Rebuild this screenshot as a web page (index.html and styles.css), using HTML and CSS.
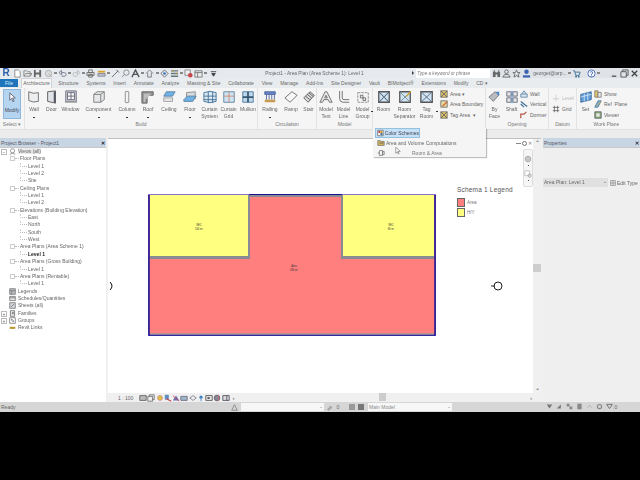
FILE: index.html
```html
<!DOCTYPE html>
<html lang="en">
<head>
    <meta charset="UTF-8">
    <title>Project1 - Area Plan (Area Scheme 1): Level 1</title>
    <link rel="stylesheet" href="styles.css">
</head>
<body>
<div class="letterbox"></div>
<div class="app">
    <!-- Title bar -->
    <div class="titlebar">
        <div class="qat">
            <span class="logo">R</span>
            <svg viewBox="0 0 10 10"><path d="M2 1h4l2 2v6H2z" fill="#fff" stroke="#888"/></svg>
            <svg viewBox="0 0 10 10"><path d="M1 8V2h3l1 1h3v5zM1 8l2-3h7l-2 3" fill="#e8e8e8" stroke="#888"/></svg>
            <svg viewBox="0 0 10 10"><path d="M1 1h8v8H1z" fill="#666"/><path d="M3 1h4v3H3zM3 6h4v3H3z" fill="#eee"/></svg>
            <svg viewBox="0 0 10 10"><circle cx="5" cy="5" r="3.500" fill="#ddd" stroke="#aaa"/><path d="M5 5l4 4" stroke="#aaa"/></svg>
            <i class="dd"></i>
            <svg viewBox="0 0 10 10"><path d="M1 4l3-2.500v5zM4 4h3a2 2 0 0 1 0 4H4" fill="none" stroke="#778"/></svg>
            <i class="dd"></i>
            <svg viewBox="0 0 10 10"><path d="M9 4L6 1.500v5zM6 4H3a2 2 0 0 0 0 4h3" fill="none" stroke="#bbb"/></svg>
            <i class="dd"></i>
            <svg viewBox="0 0 10 10"><path d="M3 1h4v3H3zM1 4h8v3H1zM3 6h4v3H3z" fill="#eee" stroke="#666"/></svg>
            <svg viewBox="0 0 10 10"><path d="M1 2h8v2H1z" fill="#d8a52a"/><path d="M1 5h8v3H1z" fill="#b9c2cc" stroke="#889"/></svg>
            <i class="dd"></i>
            <svg viewBox="0 0 10 10"><path d="M1 9l7-7M6 1l3 3" stroke="#666" fill="none"/></svg>
            <svg viewBox="0 0 10 10"><circle cx="6" cy="4" r="3" fill="none" stroke="#888"/><path d="M4 6L1 9" stroke="#888"/></svg>
            <svg viewBox="0 0 10 10"><path d="M1 9l4-8 4 8M3 6h4" fill="none" stroke="#555" stroke-width="1.500"/></svg>
            <i class="dd"></i>
            <svg viewBox="0 0 10 10"><path d="M1 5l4-4 4 4M3 4v5h4V4" fill="none" stroke="#777"/></svg>
            <i class="dd"></i>
            <svg viewBox="0 0 10 10"><path d="M5 1l4 4-4 4-4-4z" fill="none" stroke="#666"/><circle cx="5" cy="5" r="1.500" fill="#3a78b8"/></svg>
            <svg viewBox="0 0 10 10"><path d="M1 2h8M1 5h8M1 8h8" stroke="#677" stroke-width="1.500"/><path d="M3 1v2M7 4v2" stroke="#c8a22a"/></svg>
            <i class="dd"></i>
            <svg viewBox="0 0 10 10"><path d="M1 1h6v6H1z" fill="#eee" stroke="#888"/><circle cx="7" cy="7" r="2.500" fill="#c9454a"/></svg>
            <svg viewBox="0 0 10 10"><path d="M1 2h8v7H1z" fill="#eee" stroke="#777"/><path d="M1 4h8M4 4v5" stroke="#777"/></svg>
            <i class="dd"></i>
            <svg viewBox="0 0 10 10"><path d="M2 3h6M3 5l2 3 2-3z" stroke="#444" fill="#444"/></svg>
        </div>
        <div class="doc-title">Project1 - Area Plan (Area Scheme 1): Level 1</div>
        <div class="arrow-r"></div>
        <div class="search">Type a keyword or phrase</div>
        <div class="infocenter">
            <svg viewBox="0 0 10 10"><path d="M1 3h3v6H1zM6 3h3v6H6zM2 1h1v2H2zM7 1h1v2H7zM4 4h2v2H4z" fill="#666"/></svg>
            <svg viewBox="0 0 10 10"><circle cx="5" cy="3" r="2" fill="none" stroke="#666"/><path d="M1 9l2-3h4l2 3z" fill="none" stroke="#666"/></svg>
            <svg viewBox="0 0 10 10"><path d="M5 1l1.200 3H9L6.800 6l1 3L5 7.300 2.200 9l1-3L1 4h2.800z" fill="none" stroke="#666"/></svg>
            <svg viewBox="0 0 10 10"><circle cx="5" cy="3" r="2.500" fill="#3b62b5"/><path d="M1 9.500V7h8v2.500z" fill="#3b62b5"/></svg>
            <span class="user">georget@arp...</span>
            <i class="dd"></i>
            <svg viewBox="0 0 10 10"><path d="M1 2h2l1 5h4l1-3.500H3.500" fill="none" stroke="#3f6f96"/><circle cx="4.500" cy="8.500" r="1" fill="#3f6f96"/><circle cx="7.500" cy="8.500" r="1" fill="#3f6f96"/></svg>
            <svg class="help" viewBox="0 0 10 10"><circle cx="5" cy="5" r="4" fill="#fff" stroke="#3b62b5"/><path d="M3.700 4a1.300 1.300 0 1 1 1.300 1.500V6.500M5 7.300v1" fill="none" stroke="#3b62b5"/></svg>
            <i class="dd"></i>
        </div>
        <div class="winbtns">
            <svg viewBox="0 0 10 10"><path d="M2 8h5" stroke="#555" stroke-width="1.500"/></svg>
            <svg viewBox="0 0 10 10"><path d="M1 3h6v6H1zM3 3V1h6v6H7" fill="none" stroke="#555"/></svg>
            <svg viewBox="0 0 10 10"><path d="M2 2l6 6M8 2l-6 6" stroke="#444" stroke-width="1.500"/></svg>
        </div>
    </div>

    <!-- Tabs -->
    <div class="tabs">
        <div class="tab-file">File</div>
        <div class="tab active">Architecture</div>
        <div class="tab">Structure</div>
        <div class="tab">Systems</div>
        <div class="tab">Insert</div>
        <div class="tab">Annotate</div>
        <div class="tab">Analyze</div>
        <div class="tab">Massing &amp; Site</div>
        <div class="tab">Collaborate</div>
        <div class="tab">View</div>
        <div class="tab">Manage</div>
        <div class="tab">Add-Ins</div>
        <div class="tab">Site Designer</div>
        <div class="tab">Vault</div>
        <div class="tab">BIMobject®</div>
        <div class="tab">Extensions</div>
        <div class="tab">Modify</div>
        <div class="tab">CD ▾</div>
    </div>

    <!-- Ribbon -->
    <div class="ribbon">
        <div class="panel p-select">
            <div class="tools">
                <div class="modify">
                    <svg viewBox="0 0 12 12"><path d="M3 1v8l2-2 1.500 3.500 1.200-.5L6.200 6.500H9z" fill="#fff" stroke="#667"/></svg>
                    <span>Modify</span>
                </div>
            </div>
            <div class="panel-label">Select ▾</div>
        </div>
        <div class="panel p-build">
            <div class="tools">
                <div class="tool w18"><svg viewBox="0 0 16 16"><path d="M2 2q5 3 11 1v10q-6 2-11-1z" fill="#eceef0" stroke="#666"/></svg><span>Wall</span><b></b></div>
                <div class="tool w17"><svg viewBox="0 0 16 16"><path d="M3 2l9-1v14l-9-2z" fill="#dfe2e6" stroke="#555"/><path d="M10 2l2-1v14l-2-1z" fill="#556"/></svg><span>Door</span></div>
                <div class="tool w21"><svg viewBox="0 0 16 16"><path d="M2 1h12v12H2z" fill="#cfd5da" stroke="#667"/><path d="M4 3h8v8H4z" fill="#f4f6f7" stroke="#667"/><path d="M8 3v8M4 7h8" stroke="#667"/><path d="M1 13h14v1.500H1z" fill="#999"/></svg><span>Window</span></div>
                <div class="tool w35"><svg viewBox="0 0 16 16"><path d="M2 5l4-3h8v9l-4 3H2z" fill="#e6e8ea" stroke="#777"/><path d="M2 5h8v9M10 5l4-3" fill="none" stroke="#777"/></svg><span>Component</span><b></b></div>
                <div class="tool w22"><svg viewBox="0 0 16 16"><path d="M6 2q2-1 4 0v12q-2 1-4 0z" fill="#f2f3f4" stroke="#888"/></svg><span>Column</span><b></b></div>
                <div class="tool w20"><svg viewBox="0 0 16 16"><path d="M1 2h13v4H7v9H1z" fill="#8f8f8f" stroke="#666"/><path d="M3 4h9L5 11v3H3z" fill="#bdbdbd"/></svg><span>Roof</span><b></b></div>
                <div class="tool w22"><svg viewBox="0 0 16 16"><path d="M5 2h10l-3 5H2z" fill="#6fb3e6" stroke="#5a7f9f"/><path d="M2 9h10v4H2z" fill="#e8e9ea" stroke="#999"/></svg><span>Ceiling</span></div>
                <div class="tool w20"><svg viewBox="0 0 16 16"><path d="M4 3l10-1v8l-10 1z" fill="#d8dadc" stroke="#888"/><path d="M1 11l4-4h10l-4 6H1z" fill="#6fb3e6" stroke="#5a7f9f"/></svg><span>Floor</span><b></b></div>
                <div class="tool w19"><svg viewBox="0 0 16 16"><path d="M1 3q7-3 14 0v10q-7 3-14 0z" fill="#dbe8f2" stroke="#3f6f96"/><path d="M6 2v13M11 2v13M1 7h14M1 11h14" stroke="#3f6f96" fill="none"/></svg><span>Curtain<br>System</span></div>
                <div class="tool w19"><svg viewBox="0 0 16 16"><path d="M2 2h12v12H2z" fill="#cfe3f3" stroke="#5a7f9f"/><path d="M8 2v12M2 7h12" stroke="#d08a6a"/></svg><span>Curtain<br>Grid</span></div>
                <div class="tool w20"><svg viewBox="0 0 16 16"><path d="M2 2h12v12H2z" fill="#bcd8ee" stroke="#4a7596"/><path d="M8 2v12M2 8h12" stroke="#37566f" stroke-width="2"/></svg><span>Mullion</span></div>
            </div>
            <div class="panel-label">Build</div>
        </div>
        <div class="panel p-circ">
            <div class="tools">
                <div class="tool w24"><svg viewBox="0 0 16 16"><path d="M2 2h12v3H2z" fill="#6b86c9" stroke="#48609c"/><path d="M4 5v6M7 5v6M10 5v6M13 5v6" stroke="#48609c"/><path d="M2 11h12v3H2z" fill="#c89b55"/></svg><span>Railing</span><b></b></div>
                <div class="tool w18"><svg viewBox="0 0 16 16"><path d="M1 9l8-7 6 4-8 8z" fill="#f7f7f7" stroke="#666"/></svg><span>Ramp</span></div>
                <div class="tool w17"><svg viewBox="0 0 16 16"><path d="M2 9l7-7 5 4-7 8z" fill="#dcdcdc" stroke="#555"/><path d="M4 7l5 4M6 5l5 4M8 3.500l5 4" stroke="#555"/></svg><span>Stair</span></div>
            </div>
            <div class="panel-label">Circulation</div>
        </div>
        <div class="panel p-model">
            <div class="tools">
                <div class="tool w18"><svg viewBox="0 0 16 16"><path d="M1 14L7 2h2l6 12h-3l-1.500-3h-5L4 14zM6.500 9h3L8 6z" fill="#e9e9e9" stroke="#666"/></svg><span>Model<br>Text</span></div>
                <div class="tool w17"><svg viewBox="0 0 16 16"><path d="M3 1v9q0 4 4 4h7M6 1v8q0 2 2 2h6" fill="none" stroke="#666"/></svg><span>Model<br>Line</span></div>
                <div class="tool w21"><svg viewBox="0 0 16 16"><path d="M2 3h12v11H2z" fill="none" stroke="#888" stroke-dasharray="3 1"/><path d="M5 6h3v3H5zM8 9h3v3H8z" fill="#eee" stroke="#666"/></svg><span>Model<br>Group</span><em></em></div>
            </div>
            <div class="panel-label">Model</div>
        </div>
        <div class="panel p-room">
            <div class="tools">
                <div class="tool w21"><svg viewBox="0 0 16 16"><path d="M2 2h12v12H2z" fill="#cfe3f3" stroke="#555" stroke-width="1.500"/><path d="M2 2l12 12M14 2L2 14" stroke="#567" stroke-width="1.200"/></svg><span>Room</span></div>
                <div class="tool w21"><svg viewBox="0 0 16 16"><path d="M2 2h12v12H2z" fill="#cfe3f3" stroke="#555" stroke-width="1.500"/><path d="M2 2l12 12M14 2L2 14" stroke="#789"/><path d="M9 7l5-6 1 1-5 6z" fill="#d8a52a"/></svg><span>Room<br>Separator</span></div>
                <div class="tool w23"><svg viewBox="0 0 16 16"><path d="M1 2h13v12H1z" fill="#cfe3f3" stroke="#555" stroke-width="1.500"/><path d="M1 2l13 12M14 2L1 14" stroke="#567"/></svg><span>Tag<br>Room</span><em></em></div>
                <div class="stack s-area">
                    <div class="row"><svg viewBox="0 0 10 10"><path d="M1 1h8v8H1z" fill="#e2c66a" stroke="#666"/><path d="M1 1l8 8M9 1L1 9" stroke="#556"/></svg>Area&nbsp;▾</div>
                    <div class="row"><svg viewBox="0 0 10 10"><path d="M1 1h8v8H1z" fill="#e9d9a0" stroke="#666"/><path d="M3 8l6-6" stroke="#c8602a" stroke-width="1.500"/></svg>Area Boundary</div>
                    <div class="row"><svg viewBox="0 0 10 10"><path d="M1 1h8v8H1z" fill="#dfc564" stroke="#666"/><path d="M1 1l8 8M9 1L1 9" stroke="#556"/></svg>Tag&nbsp;Area&nbsp;&nbsp;▾</div>
                </div>
            </div>
        </div>
        <div class="panel p-open">
            <div class="tools">
                <div class="tool w17"><svg viewBox="0 0 16 16"><path d="M1 8l7-6 5 3-7 8z" fill="#b8bcc0" stroke="#777"/><path d="M9 2l4 0-1 5z" fill="#4a86c5"/></svg><span>By<br>Face</span></div>
                <div class="tool w17"><svg viewBox="0 0 16 16"><path d="M2 2h5v5H2zM9 2h5v5H9zM2 9h5v5H2zM9 9h5v5H9z" fill="#e3e5e7" stroke="#667"/><path d="M8 1v14" stroke="#4a86c5"/></svg><span>Shaft</span></div>
                <div class="stack s-open">
                    <div class="row"><svg viewBox="0 0 10 10"><path d="M2 5l3-4 3 4M1 5h8v4H1z" fill="#d8e6f2" stroke="#5a7f9f"/></svg>Wall</div>
                    <div class="row"><svg viewBox="0 0 10 10"><path d="M1 2l8 6M1 5l4 4" stroke="#3f6f96" stroke-width="1.500"/></svg>Vertical</div>
                    <div class="row"><svg viewBox="0 0 10 10"><path d="M1 9V4h4l3-3" fill="none" stroke="#b5553f" stroke-width="1.500"/></svg>Dormer</div>
                </div>
            </div>
            <div class="panel-label">Opening</div>
        </div>
        <div class="panel p-datum">
            <div class="tools">
                <div class="stack s-datum">
                    <div class="row off"><svg viewBox="0 0 10 10"><path d="M1 6h8M5 1v8" stroke="#ccc"/></svg>Level</div>
                    <div class="row"><svg viewBox="0 0 10 10"><path d="M1 3h8M1 7h8M3 1v8M7 1v8" stroke="#666"/></svg>Grid</div>
                </div>
            </div>
            <div class="panel-label">Datum</div>
        </div>
        <div class="panel p-work">
            <div class="tools">
                <div class="tool w17"><svg viewBox="0 0 16 16"><path d="M2 5l12-3v9L2 14z" fill="#5f9bd5" stroke="#3b6b98"/><path d="M6 4v9M10 3v9M2 8l12-3" stroke="#cfe3f3"/></svg><span>Set</span></div>
                <div class="stack s-work">
                    <div class="row"><svg viewBox="0 0 10 10"><path d="M1 1h4v8H1z" fill="#e2c66a" stroke="#777"/><path d="M5 3h4v6H5z" fill="#e9e9e9" stroke="#777"/></svg>Show</div>
                    <div class="row"><svg viewBox="0 0 10 10"><path d="M1 9l4-8h4L5 9z" fill="#7fb3de" stroke="#4a7596"/><path d="M3 7l6-5" stroke="#d8a52a"/></svg>Ref&nbsp;&nbsp;Plane</div>
                    <div class="row"><svg viewBox="0 0 10 10"><path d="M1 1h8v8H1z" fill="#8fb27a" stroke="#556"/><path d="M3 3h4v4H3z" fill="#e9e9e9"/></svg>Viewer</div>
                </div>
            </div>
            <div class="panel-label">Work Plane</div>
        </div>
    </div>
    <div class="ribbon-foot"></div>

    <!-- Color schemes dropdown, hangs over the canvas -->
    <div class="slideout">
        <div class="slide-item hot">
            <svg viewBox="0 0 10 10"><path d="M1 1h8v8H1z" fill="#fff" stroke="#555"/><path d="M2 2h3v3H2z" fill="#c9454a"/><path d="M5 5h3v3H5z" fill="#3f6f96"/><path d="M5 2h3v3H5z" fill="#d8a52a"/></svg>
            Color Schemes
        </div>
        <div class="slide-item">
            <svg viewBox="0 0 10 10"><path d="M1 8V2h3l1 1h4v5z" fill="#d8b85a" stroke="#777"/><path d="M3 5h5" stroke="#556"/></svg>
            Area and Volume Computations
        </div>
        <div class="slide-foot">
            <svg viewBox="0 0 10 10"><path d="M1 5h2M3 2h4v6H3zM7 3h2v4H7z" fill="none" stroke="#777"/></svg>
            <span>Room &amp; Area</span>
        </div>
    </div>

    <div class="main">
        <!-- Project browser -->
        <div class="browser">
            <div class="pane-head">Project Browser - Project1 <span class="x">✕</span></div>
            <ul class="tree">
                <li class="t-root"><i class="box">−</i><svg viewBox="0 0 10 10"><circle cx="5" cy="4" r="3" fill="none" stroke="#777"/><path d="M1 9q4-3 8 0" fill="none" stroke="#777"/></svg><span class="sel">Views (all)</span></li>
                <li class="t-group">Floor Plans</li>
                <li class="t-leaf">Level 1</li>
                <li class="t-leaf">Level 2</li>
                <li class="t-leaf">Site</li>
                <li class="t-group">Ceiling Plans</li>
                <li class="t-leaf">Level 1</li>
                <li class="t-leaf">Level 2</li>
                <li class="t-group">Elevations (Building Elevation)</li>
                <li class="t-leaf">East</li>
                <li class="t-leaf">North</li>
                <li class="t-leaf">South</li>
                <li class="t-leaf">West</li>
                <li class="t-group">Area Plans (Area Scheme 1)</li>
                <li class="t-leaf cur">Level 1</li>
                <li class="t-group">Area Plans (Gross Building)</li>
                <li class="t-leaf">Level 1</li>
                <li class="t-group">Area Plans (Rentable)</li>
                <li class="t-leaf">Level 1</li>
                <li class="t-top"><svg viewBox="0 0 10 10"><path d="M1 1h8v8H1z" fill="#bfc4c9" stroke="#666"/><path d="M1 4h8M4 4v5" stroke="#666"/></svg>Legends</li>
                <li class="t-top"><svg viewBox="0 0 10 10"><path d="M1 2h8v6H1z" fill="#e6e6e6" stroke="#666"/><path d="M1 4h8" stroke="#666"/></svg>Schedules/Quantities</li>
                <li class="t-top"><svg viewBox="0 0 10 10"><path d="M1 1h8v8H1z" fill="#d5d8db" stroke="#666"/><path d="M3 7l4-4" stroke="#666"/></svg>Sheets (all)</li>
                <li class="t-top"><i class="box">+</i><svg viewBox="0 0 10 10"><path d="M2 1h6v8H2z" fill="#eee" stroke="#555"/><path d="M4 3h3v3H4z" fill="#888"/></svg>Families</li>
                <li class="t-top"><i class="box">+</i><svg viewBox="0 0 10 10"><path d="M1 1h8v8H1z" fill="none" stroke="#666"/><path d="M3 3h2v2H3zM5 5h2v2H5z" fill="#778"/></svg>Groups</li>
                <li class="t-top"><svg viewBox="0 0 10 10"><path d="M1 4h8v3H1z" fill="#b99a2e"/></svg>Revit Links</li>
            </ul>
        </div>

        <!-- View area -->
        <div class="view">
            <div class="view-top">
                <div class="canvas">
                    <svg class="plan" viewBox="0 0 288 142">
                        <rect x="0.500" y="0.500" width="287" height="141" fill="#ff7f7f" stroke="#8a70c8"/>
                        <path d="M1 1v140h286V1" fill="none" stroke="#1a1090" stroke-width="1.500"/>
                        <path d="M2 1h98v61H2zM195 1h91v61h-91z" fill="#ffff80"/>
                        <path d="M100 1h2v64H2v-3h98zM193 1h2v61h91v3h-93z" fill="#8a8a94"/>
                        <path d="M101 1h93v2h-93z" fill="#8a8a94"/>
                        <path d="M101 .5h93" stroke="#1a1090"/>
                        <path d="M2 140h284" stroke="#9a9aa0" stroke-width="1.500"/>
                        <text x="51" y="32" class="room">SEC</text>
                        <text x="51" y="35.500" class="room">100 m²</text>
                        <text x="243" y="32" class="room">SEC</text>
                        <text x="243" y="35.500" class="room">96 m²</text>
                        <text x="146" y="73" class="room">Area</text>
                        <text x="146" y="76.500" class="room">490 m²</text>
                    </svg>
                    <div class="legend">
                        <div class="legend-title">Schema 1 Legend</div>
                        <div class="legend-row"><i class="sw red"></i>Area</div>
                        <div class="legend-row"><i class="sw yel"></i>H/Y</div>
                    </div>
                    <div class="view-ctl"><i class="dash"></i><i class="ring"></i><span>✕</span></div>
                    <div class="navbar">
                        <svg viewBox="0 0 10 10"><circle cx="5" cy="5" r="3.500" fill="#ddd" stroke="#999"/><circle cx="5" cy="5" r="1.500" fill="#fff" stroke="#999"/></svg>
                        <i class="dot"></i>
                        <svg viewBox="0 0 10 10"><path d="M1 1h6v6H1z" fill="#fff" stroke="#bbb"/><circle cx="7" cy="7" r="2" fill="none" stroke="#999"/></svg>
                        <i class="dot"></i>
                    </div>
                    <svg class="mark mark-l" viewBox="0 0 6 10"><path d="M1 1q4 4 0 8" fill="none" stroke="#111"/></svg>
                    <svg class="mark mark-r" viewBox="0 0 14 10"><circle cx="8" cy="5" r="4" fill="#fff" stroke="#222"/><path d="M1 5h4" stroke="#222"/></svg>
                    <svg class="pointer" viewBox="0 0 8 10"><path d="M1 0v8l2-2 1.500 3 1-.5L4 5.500h3z" fill="#fff" stroke="#555" stroke-width=".7"/></svg>
                </div>
                <div class="vscroll"><span>⌃</span><i></i><span class="down">⌄</span></div>
            </div>
            <div class="viewbar">
                <span class="scale">1 : 100</span>
                <svg viewBox="0 0 10 10"><path d="M1 2h8v6H1z" fill="#bbb" stroke="#555"/></svg>
                <svg viewBox="0 0 10 10"><path d="M1 3h6v6H1zM3 3V1h6v6H7" fill="#eee" stroke="#666"/></svg>
                <svg viewBox="0 0 10 10"><circle cx="5" cy="5" r="3" fill="#e8c23a" stroke="#b88"/></svg>
                <svg viewBox="0 0 10 10"><path d="M1 1h5v6H1z" fill="#5f8fc0"/><path d="M3 6l6 3" stroke="#c9454a" stroke-width="1.500"/></svg>
                <svg viewBox="0 0 10 10"><path d="M1 8l4-6 4 6z" fill="#6b6fae"/><path d="M1 2l8 7" stroke="#c9454a"/></svg>
                <svg viewBox="0 0 10 10"><path d="M1 3h8v5H1z" fill="#9fb6cc" stroke="#667"/></svg>
                <svg viewBox="0 0 10 10"><path d="M1 5l4-3 4 3-4 3z" fill="none" stroke="#778"/></svg>
                <svg viewBox="0 0 10 10"><circle cx="5" cy="4" r="2" fill="#3f82c5"/><path d="M5 6v3" stroke="#3f82c5"/></svg>
                <svg viewBox="0 0 10 10"><path d="M1 2h8v6H1z" fill="#eee" stroke="#444"/><path d="M3 4h3v2H3z" fill="#444"/></svg>
                <svg viewBox="0 0 10 10"><circle cx="5" cy="5" r="3.500" fill="#889" stroke="#556"/><path d="M7 1v8" stroke="#d06a6a"/></svg>
                <svg viewBox="0 0 10 10"><path d="M1 2h8v6H1z" fill="#ddd" stroke="#445"/><path d="M6 2v6" stroke="#445"/></svg>
                <span class="lt">‹</span>
                <div class="hscroll"><i></i></div>
                <span class="rt">›</span>
            </div>
        </div>

        <!-- Properties -->
        <div class="props">
            <div class="pane-head">Properties <span class="x">✕</span></div>
            <div class="props-row">
                <div class="props-select">Area Plan: Level 1<span>⌄</span></div>
                <div class="edit-type"><svg viewBox="0 0 10 10"><path d="M1 1h8v8H1z" fill="#eee" stroke="#777"/><path d="M1 5h8M5 1v8" stroke="#777"/></svg>Edit Type</div>
            </div>
        </div>
    </div>

    <!-- Status bar -->
    <div class="statusbar">
        <span class="ready">Ready</span>
        <svg class="st-a" viewBox="0 0 10 10"><path d="M1 9l4-8 4 8z" fill="none" stroke="#777"/></svg>
        <div class="st-input st-i1"><span>⌄</span></div>
        <svg viewBox="0 0 10 10"><path d="M1 8l4-5 2 2-5 4z" fill="#bbb" stroke="#888"/></svg>
        <span class="st-zero">0</span>
        <i class="st-sq"></i>
        <i class="st-sq dark"></i>
        <div class="st-input st-i2">Main Model<span>⌄</span></div>
        <div class="st-right">
            <svg viewBox="0 0 10 10"><path d="M1 2h8L5 8z" fill="#777"/></svg>
            <svg viewBox="0 0 10 10"><path d="M1 8l6-6v6z" fill="#777"/></svg>
            <svg viewBox="0 0 10 10"><path d="M1 1h4v4H1zM5 5h4v4H5z" fill="#888"/></svg>
            <svg viewBox="0 0 10 10"><path d="M2 1h6v8H2z" fill="#888"/></svg>
            <svg viewBox="0 0 10 10"><path d="M2 7l3-4 3 4" fill="none" stroke="#aaa"/></svg>
            <svg viewBox="0 0 10 10"><circle cx="5" cy="5" r="3" fill="none" stroke="#888" stroke-width="1.500"/></svg>
            <svg viewBox="0 0 10 10"><path d="M1 2h8L5 8z" fill="none" stroke="#666" stroke-width="1.200"/></svg>
            <span class="st-num">:0</span>
        </div>
    </div>
</div>
<div class="letterbox"></div>
</body>
</html>
```

FILE: styles.css
```css
html, body {
    margin: 0;
    height: 100%;
    background-color: #000;
    overflow: hidden;
    font-family: "Liberation Sans", Arial, sans-serif;
    font-size: 5px;
    color: #555;
}

.letterbox {
    height: 68px;
    background-color: #000;
}

.app {
    position: relative;
    height: 344px;
    display: flex;
    flex-direction: column;
    background-color: #f0f0f0;
    filter: blur(.3px); /* the source is a soft video frame */
}

/* Title bar */
.titlebar {
    height: 10px;
    display: flex;
    align-items: center;
    background-color: #e6eaef;
}

.qat {
    width: 220px;
    display: flex;
    align-items: center;
    gap: 1.150px;
    box-sizing: border-box;
}

.qat svg, .infocenter svg, .winbtns svg {
    width: 9px;
    height: 9px;
    flex: none;
}

.logo {
    width: 12px;
    text-align: center;
    font-size: 10px;
    line-height: 10px;
    font-weight: bold;
    color: #2b5fa8;
}

.dd {
    width: 3px;
    height: 2px;
    flex: none;
    background-color: #888;
}

.doc-title {
    width: 190px;
    text-align: center;
    font-size: 4.8px;
    color: #666;
    white-space: nowrap;
}

.arrow-r {
    width: 0;
    margin: 0 2px 0 3px;
    border-left: 2px solid #333;
    border-top: 2px solid transparent;
    border-bottom: 2px solid transparent;
}

.search {
    width: 74px;
    height: 9px;
    line-height: 9px;
    padding-left: 1px;
    box-sizing: border-box;
    background-color: #fff;
    font-style: italic;
    font-size: 4.6px;
    color: #777;
    white-space: nowrap;
}

.infocenter {
    display: flex;
    align-items: center;
    gap: 1px;
    margin-left: 2px;
    height: 10px;
    background-color: #dfe3e8;
    width: 148px;
}

.user {
    font-size: 5px;
    color: #666;
    width: 34px;
    white-space: nowrap;
    margin-left: 1px;
}

.help {
    margin-left: 5px;
}

.winbtns {
    position: absolute;
    right: 0;
    top: 0;
    height: 10px;
    display: flex;
    align-items: center;
    gap: 1px;
    padding-right: 1px;
}

/* Tabs */
.tabs {
    height: 10px;
    display: flex;
    align-items: stretch;
    background-color: #e9ecef;
    color: #666;
    white-space: nowrap;
}

.tab-file {
    width: 18px;
    margin: 1px 0;
    text-align: center;
    line-height: 8px;
    color: #d9ecfa;
    background-color: #1f74bb;
}

.tab {
    line-height: 10px;
    margin-left: 7.800px;
}

.tab.active {
    width: 31px;
    margin-left: 3px;
    margin-right: -1.500px;
    text-align: center;
    background-color: #f6f6f6;
    border: 1px solid #d0d4d8;
    border-bottom: none;
    line-height: 9px;
    box-sizing: border-box;
}

/* Ribbon */
.ribbon {
    height: 41px;
    display: flex;
    background-color: #f5f5f5;
}

.ribbon-foot {
    height: 9px;
    background-color: #ececec;
    border-top: 1px solid #e2e2e2;
    box-sizing: border-box;
}

.panel {
    display: flex;
    flex-direction: column;
    box-sizing: border-box;
    border-right: 1px solid #e2e2e2;
}

.p-select { width: 25px; }
.p-build  { width: 233px; }
.p-circ   { width: 59px; }
.p-model  { width: 56px; }
.p-room   { width: 113px; }
.p-open   { width: 63px; }
.p-datum  { width: 28px; }
.p-work   { width: 59px; border-right: none; }

.tools {
    height: 32px;
    display: flex;
}

.panel-label {
    height: 9px;
    line-height: 9px;
    text-align: center;
    color: #777;
}

.modify {
    width: 18px;
    height: 30px;
    margin: 1px 0 0 3px;
    background-color: #b5d4ef;
    border: 1px solid #8fb9dc;
    box-sizing: border-box;
    text-align: center;
    color: #445;
    line-height: 7px;
}

.modify svg {
    display: block;
    width: 11px;
    height: 11px;
    margin: 2px auto 4px;
}

.tool {
    flex: none;
    position: relative;
    display: flex;
    flex-direction: column;
    align-items: center;
    text-align: center;
    line-height: 7px;
    color: #666;
    white-space: nowrap;
}

.tool svg {
    width: 14px;
    height: 14px;
    margin: 2px 0;
}

.tool b {
    width: 2px;
    height: 1px;
    margin-top: 4px;
    background-color: #333;
}

.tool em {
    position: absolute;
    right: 0;
    bottom: 8px;
    width: 2px;
    height: 1px;
    background-color: #333;
}

.w17 { width: 17px; }
.w18 { width: 18px; }
.w19 { width: 19px; }
.w20 { width: 20px; }
.w21 { width: 21px; }
.w22 { width: 22px; }
.w23 { width: 23px; }
.w24 { width: 24px; }
.w35 { width: 35px; }

.stack {
    display: flex;
    flex-direction: column;
    padding-top: 1px;
    white-space: nowrap;
}

.s-area {
    padding-left: 2px;
}

.row {
    height: 10.500px;
    display: flex;
    align-items: center;
    gap: 2px;
    color: #666;
}

.row svg {
    width: 8px;
    height: 8px;
    flex: none;
}

.row.off {
    color: #bbb;
}

.s-datum {
    padding: 5px 0 0 3px;
}

/* Dropdown under the Room & Area panel */
.slideout {
    position: absolute;
    left: 373px;
    top: 60px;
    width: 113px;
    height: 29px;
    padding: 0 2px;
    box-sizing: border-box;
    background-color: #f5f5f5;
    box-shadow: 1px 1px 1px rgba(0, 0, 0, .25);
    color: #666;
    z-index: 5;
    white-space: nowrap;
}

.slide-item {
    height: 10px;
    display: flex;
    align-items: center;
    gap: 1px;
    padding-left: 2px;
}

.slide-item svg, .slide-foot svg {
    width: 8px;
    height: 8px;
}

.slide-item.hot {
    width: 45px;
    padding-left: 1px;
    background-color: #c6e0f5;
    border: 1px solid #94c0e2;
    box-sizing: border-box;
    color: #445;
}

.slide-foot {
    height: 10px;
    display: flex;
    align-items: center;
    padding-left: 2px;
    color: #777;
}

.slide-foot span {
    margin-left: 27px;
}

/* Main area */
.main {
    height: 264px;
    display: flex;
}

.browser {
    width: 106px;
    margin-right: 2px;
    background-color: #fff;
    flex: none;
}

.pane-head {
    height: 10px;
    line-height: 10px;
    padding-left: 1px;
    position: relative;
    background-color: #c8d5e3;
    color: #556;
    border-bottom: 1px solid #c8c8c8;
    box-sizing: border-box;
}

.pane-head .x {
    position: absolute;
    right: 1px;
    top: 0;
    color: #223;
    font-weight: bold;
}

.tree {
    list-style: none;
    margin: 0;
    padding: 0;
    color: #666;
}

.tree li {
    position: relative;
    height: 7.350px;
    line-height: 7.350px;
    white-space: nowrap;
}

.tree svg {
    position: absolute;
    left: 9px;
    top: 0;
    width: 7px;
    height: 7px;
}

.box {
    position: absolute;
    left: 1px;
    top: 1px;
    width: 4px;
    height: 4px;
    border: 1px solid #bbb;
    font-style: normal;
    font-size: 5px;
    line-height: 4px;
    text-align: center;
    color: #666;
}

.t-root {
    padding-left: 18px;
}

.t-root .sel {
    background-color: #eaeaea;
}

.t-group {
    padding-left: 20px;
}

.t-group::before {
    content: "";
    position: absolute;
    left: 10px;
    top: 1px;
    width: 3px;
    height: 3px;
    border: 1px solid #ccc;
}

.t-group::after {
    content: "";
    position: absolute;
    left: 15px;
    top: 3px;
    width: 4px;
    border-top: 1px dotted #bbb;
}

.t-leaf {
    padding-left: 28px;
}

.t-leaf::before {
    content: "";
    position: absolute;
    left: 20px;
    top: 3px;
    width: 7px;
    border-top: 1px dotted #bbb;
}

.t-leaf::after {
    content: "";
    position: absolute;
    left: 20px;
    top: 0;
    height: 4px;
    border-left: 1px dotted #ccc;
}

.t-leaf.cur {
    font-weight: bold;
    color: #222;
}

.t-top {
    padding-left: 18px;
}

/* View */
.view {
    width: 433px;
    display: flex;
    flex-direction: column;
    border-top: 1px solid #c0c0c0;
    box-sizing: border-box;
}

.view-top {
    height: 254px;
    display: flex;
}

.canvas {
    position: relative;
    flex: 1;
    background-color: #fff;
    overflow: hidden;
}

.plan {
    position: absolute;
    left: 40px;
    top: 55px;
    width: 288px;
    height: 142px;
}

.room {
    font-size: 2.600px;
    text-anchor: middle;
    fill: #333;
}

.legend {
    position: absolute;
    left: 349px;
    top: 46px;
    color: #666;
}

.legend-title {
    font-size: 6.500px;
    letter-spacing: .2px;
    color: #555;
    line-height: 9px;
    margin-bottom: 4px;
}

.legend-row {
    display: flex;
    align-items: center;
    gap: 2px;
    height: 9.500px;
    font-size: 4.500px;
    color: #777;
}

.sw {
    width: 6px;
    height: 7px;
    border: 1px solid #666;
}

.sw.red { background-color: #ff7f7f; }
.sw.yel { background-color: #ffff80; }

.view-ctl {
    position: absolute;
    right: 1px;
    top: 2px;
    display: flex;
    align-items: center;
    gap: 1px;
    color: #777;
    font-size: 4.500px;
}

.dash {
    width: 5px;
    border-top: 1px solid #888;
}

.ring {
    width: 3px;
    height: 3px;
    border: 1px solid #777;
    border-radius: 50%;
}

.navbar {
    position: absolute;
    left: 415px;
    top: 10px;
    width: 10px;
    height: 38px;
    padding-top: 5px;
    box-sizing: border-box;
    display: flex;
    flex-direction: column;
    align-items: center;
    gap: 2px;
    border: 1px solid #ddd;
    border-radius: 2px;
    background-color: #f6f6f6;
}

.navbar svg {
    width: 8px;
    height: 8px;
}

.dot {
    width: 1px;
    height: 1px;
    margin-bottom: 2px;
    background-color: #555;
}

.mark {
    position: absolute;
    top: 142px;
    height: 10px;
}

.mark-l {
    left: 1px;
    width: 6px;
}

.mark-r {
    left: 382px;
    width: 14px;
}

.pointer {
    position: absolute;
    left: 287px;
    top: 8px;
    width: 6px;
    height: 8px;
    z-index: 6;
}

.vscroll {
    position: relative;
    width: 8px;
    background-color: #f0f0f0;
    text-align: center;
    color: #444;
    font-size: 6px;
    line-height: 8px;
}

.vscroll i {
    position: absolute;
    left: 0;
    top: 125px;
    width: 8px;
    height: 8px;
    background-color: #cdcdcd;
}

.vscroll .down {
    position: absolute;
    left: 0;
    right: 0;
    bottom: 1px;
}

.viewbar {
    height: 9px;
    display: flex;
    align-items: center;
    gap: 0;
    background-color: #f0f0f0;
    position: relative;
}

.viewbar svg {
    width: 8px;
    height: 8px;
    flex: none;
    margin-right: .25px;
}

.scale {
    width: 31px;
    padding-left: 10px;
    box-sizing: border-box;
    font-size: 5px;
    color: #666;
}

.lt {
    margin-left: 3px;
    color: #333;
}

.hscroll {
    flex: 1;
    height: 9px;
    position: relative;
}

.hscroll i {
    position: absolute;
    left: 145px;
    top: 0;
    width: 7px;
    height: 8px;
    background-color: #cdcdcd;
}

.rt {
    margin-right: 9px;
    color: #333;
}

/* Properties */
.props {
    flex: 1;
    margin-left: 2px;
    background-color: #efefef;
}

.props-row {
    display: flex;
    align-items: center;
    margin-top: 30px;
}

.props-select {
    width: 65px;
    height: 9px;
    line-height: 9px;
    padding-left: 1px;
    box-sizing: border-box;
    background-color: #e0e0e0;
    color: #666;
    position: relative;
    white-space: nowrap;
}

.props-select span {
    position: absolute;
    right: 1px;
    top: -1px;
}

.edit-type {
    display: flex;
    align-items: center;
    gap: 1px;
    margin-left: 2px;
    white-space: nowrap;
    color: #666;
}

.edit-type svg {
    width: 6px;
    height: 6px;
}

/* Status bar */
.statusbar {
    height: 10px;
    display: flex;
    align-items: center;
    background-color: #d6d6d6;
    color: #666;
    position: relative;
}

.statusbar svg {
    width: 7px;
    height: 7px;
    flex: none;
}

.ready {
    width: 231px;
    padding-left: 1px;
    box-sizing: border-box;
}

.st-a {
    margin-right: 3px;
}

.st-input {
    height: 8px;
    line-height: 8px;
    background-color: #f7f7f7;
    position: relative;
    box-sizing: border-box;
    padding-left: 1px;
    white-space: nowrap;
    color: #888;
}

.st-input span {
    position: absolute;
    right: 1px;
    top: -1px;
}

.st-i1 {
    width: 83px;
    margin-right: 3px;
}

.st-i2 {
    width: 84px;
    margin-left: 4px;
}

.st-zero {
    width: 8px;
    text-align: center;
}

.st-sq {
    width: 6px;
    height: 6px;
    margin-left: 3px;
    background-color: #999;
}

.st-zero + .st-sq {
    margin-left: 7px;
}

.st-sq.dark {
    background-color: #777;
}

.st-right {
    position: absolute;
    left: 546px;
    top: 1px;
    display: flex;
    align-items: center;
    gap: 3px;
}

.st-num {
    margin-left: -3px;
}
```
